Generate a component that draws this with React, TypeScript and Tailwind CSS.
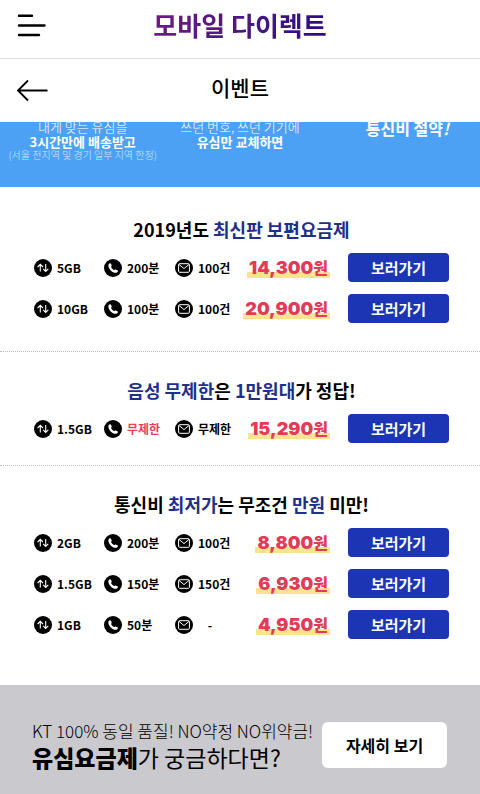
import type { ReactNode } from 'react';

type Plan = {
  data: string;
  voice: string;
  sms: string;
  price: string;
  unlimitedVoice?: boolean;
};

type PlanGroup = {
  id: string;
  title: ReactNode;
  spacing: string;
  plans: Plan[];
};

const groups: PlanGroup[] = [
  {
    id: 'universal',
    title: (
      <>
        2019년도 <span className="text-[#1f3089]">최신판 보편요금제</span>
      </>
    ),
    spacing: 'border-b pt-[30px] pb-7',
    plans: [
      { data: '5GB', voice: '200분', sms: '100건', price: '14,300' },
      { data: '10GB', voice: '100분', sms: '100건', price: '20,900' },
    ],
  },
  {
    id: 'unlimited',
    title: (
      <>
        <span className="text-[#1f3089]">음성 무제한</span>은 <span className="text-[#1f3089]">1만원대</span>가 정답!
      </>
    ),
    spacing: 'border-b pt-[26px] pb-[22px]',
    plans: [{ data: '1.5GB', voice: '무제한', sms: '무제한', price: '15,290', unlimitedVoice: true }],
  },
  {
    id: 'lowest',
    title: (
      <>
        통신비 <span className="text-[#1f3089]">최저가</span>는 무조건 <span className="text-[#1f3089]">만원</span> 미만!
      </>
    ),
    spacing: 'pt-[26px] pb-[22px]',
    plans: [
      { data: '2GB', voice: '200분', sms: '100건', price: '8,800' },
      { data: '1.5GB', voice: '150분', sms: '150건', price: '6,930' },
      { data: '1GB', voice: '50분', sms: '-', price: '4,950' },
    ],
  },
];

function DataIcon() {
  return (
    <svg viewBox="0 0 18 18" className="size-[18px] shrink-0" fill="none" aria-hidden="true">
      <circle cx="9" cy="9" r="9" fill="#000" />
      <path d="M6.3 12.4V5.6M3.6 8l2.7-2.7L9 8M11.7 5v7M9.2 9.9l2.5 2.5 2.6-2.5" stroke="#fff" strokeWidth="1.1" />
    </svg>
  );
}

function PhoneIcon() {
  return (
    <svg viewBox="0 0 18 18" className="size-[18px] shrink-0" aria-hidden="true">
      <circle cx="9" cy="9" r="9" fill="#000" />
      <path
        d="M4.6 5.3c.5-.9 1.400-1.300 2-.9.7.6 1 1.500 1.100 2.300 0 .6-.7.8-.6 1.300.5 1.400 1.600 2.500 3 3 .5.1.8-.7 1.400-.6.9.2 1.700.6 2.300 1.200.5.6-.1 1.600-.9 2-1.700.7-4.300-.2-6.200-2.200S3.900 7 4.600 5.300Z"
        fill="#fff"
      />
    </svg>
  );
}

function MailIcon() {
  return (
    <svg viewBox="0 0 18 18" className="size-[18px] shrink-0" fill="none" aria-hidden="true">
      <circle cx="9" cy="9" r="9" fill="#000" />
      <rect x="3.6" y="4.7" width="10.8" height="8.6" rx="1" stroke="#fff" />
      <path d="m4 5.400 5 4.200 5-4.200" stroke="#fff" />
    </svg>
  );
}

function PlanRow({ plan }: { plan: Plan }) {
  return (
    <li className="grid grid-cols-[70fr_71fr_64fr_91fr_119fr] items-center text-xs font-bold">
      <span className="flex items-center gap-[5px]">
        <DataIcon />
        {plan.data}
      </span>
      <span className="flex items-center gap-[5px]">
        <PhoneIcon />
        <span className={plan.unlimitedVoice ? 'text-[#e63e5c]' : ''}>{plan.voice}</span>
      </span>
      <span className="flex items-center gap-[5px]">
        <MailIcon />
        <span className={plan.sms === '-' ? 'w-6 text-center' : ''}>{plan.sms}</span>
      </span>
      <span className="justify-self-end bg-linear-to-b from-transparent from-70% to-[#fbe391] to-70% px-[2px] text-base leading-5 font-black whitespace-nowrap text-[#e23b58]">
        <span className="font-[Inter,sans-serif] text-lg leading-5">{plan.price}</span>원
      </span>
      <button
        type="button"
        aria-label={`${plan.data} 요금제 보러가기`}
        className="ml-[18px] h-[29px] rounded bg-[#1b35b5] text-[15px] leading-5 text-white"
      >
        보러가기
      </button>
    </li>
  );
}

export default function App() {
  return (
    <div className="flex min-h-screen flex-col bg-white font-['Noto_Sans_CJK_KR',sans-serif] text-black">
      <header>
        <div className="relative flex h-[59px] items-center justify-center border-b border-[#dedede] pb-2">
          <button type="button" aria-label="메뉴" className="absolute top-3 left-[17px]">
            <svg viewBox="0 0 30 28" className="h-7 w-[30px]" fill="none" stroke="#000" strokeWidth="2.4" aria-hidden="true">
              <path d="M2 3.700h13M2 13.500h25.500M2 23h20" strokeLinecap="round" />
            </svg>
          </button>
          <a
            href="#"
            className="bg-linear-to-r from-[#6d1a80] to-[#2c0b80] bg-clip-text text-[26px] leading-9 font-bold text-transparent"
          >
            모바일 다이렉트
          </a>
        </div>
        <div className="relative flex h-[63px] items-center justify-center pb-2">
          <button type="button" aria-label="뒤로" className="absolute top-5 left-4">
            <svg viewBox="0 0 34 24" className="h-6 w-[34px]" fill="none" stroke="#000" strokeWidth="1.8" aria-hidden="true">
              <path d="M31.500 11.500H2M12 1.500l-10 10 10 10" />
            </svg>
          </button>
          <h1 className="text-[21px] leading-8 font-medium">이벤트</h1>
        </div>
      </header>

      <main className="flex flex-1 flex-col">
        {/* Tail of the banner, scrolled under the header */}
        <section className="h-[65px] overflow-hidden bg-[#4da1f5] px-1 text-white">
          <div className="-mt-[3px] grid grid-cols-3 text-center text-[13px] leading-[15px] whitespace-nowrap">
            <div className="flex flex-col items-center">
              <p className="font-light">내게 맞는 유심을</p>
              <p className="font-bold">3시간만에 배송받고</p>
              <p className="text-[10px] leading-3 font-light text-[#cfe6fd]">(서울 전지역 및 경기 일부 지역 한정)</p>
            </div>
            <div>
              <p className="font-light">쓰던 번호, 쓰던 기기에</p>
              <p className="font-bold">유심만 교체하면</p>
            </div>
            <p className="pl-5 text-base leading-[18px] font-bold">
              통신비 절약<span className="italic">!</span>
            </p>
          </div>
        </section>

        {groups.map(({ id, title, spacing, plans }) => (
          <section key={id} className={`border-dotted border-[#bdbdbd] pr-[31px] pl-[34px] ${spacing}`}>
            <h2 className="text-center text-lg leading-6 font-bold">{title}</h2>
            <ul className="mt-3 flex flex-col gap-3">
              {plans.map((plan) => (
                <PlanRow key={plan.data} plan={plan} />
              ))}
            </ul>
          </section>
        ))}
      </main>

      <footer className="flex items-center justify-between bg-[#cac9ce] pt-[34px] pr-[33px] pb-[23px] pl-8">
        <p className="text-[17px] leading-6 font-light whitespace-nowrap">
          KT 100% 동일 품질! NO약정 NO위약금!
          <span className="block text-[23px] leading-7 font-normal">
            <strong className="font-black">유심요금제</strong>가 궁금하다면?
          </span>
        </p>
        <button type="button" className="h-[46px] w-[125px] shrink-0 rounded-md bg-white text-base font-bold">
          자세히 보기
        </button>
      </footer>
    </div>
  );
}
